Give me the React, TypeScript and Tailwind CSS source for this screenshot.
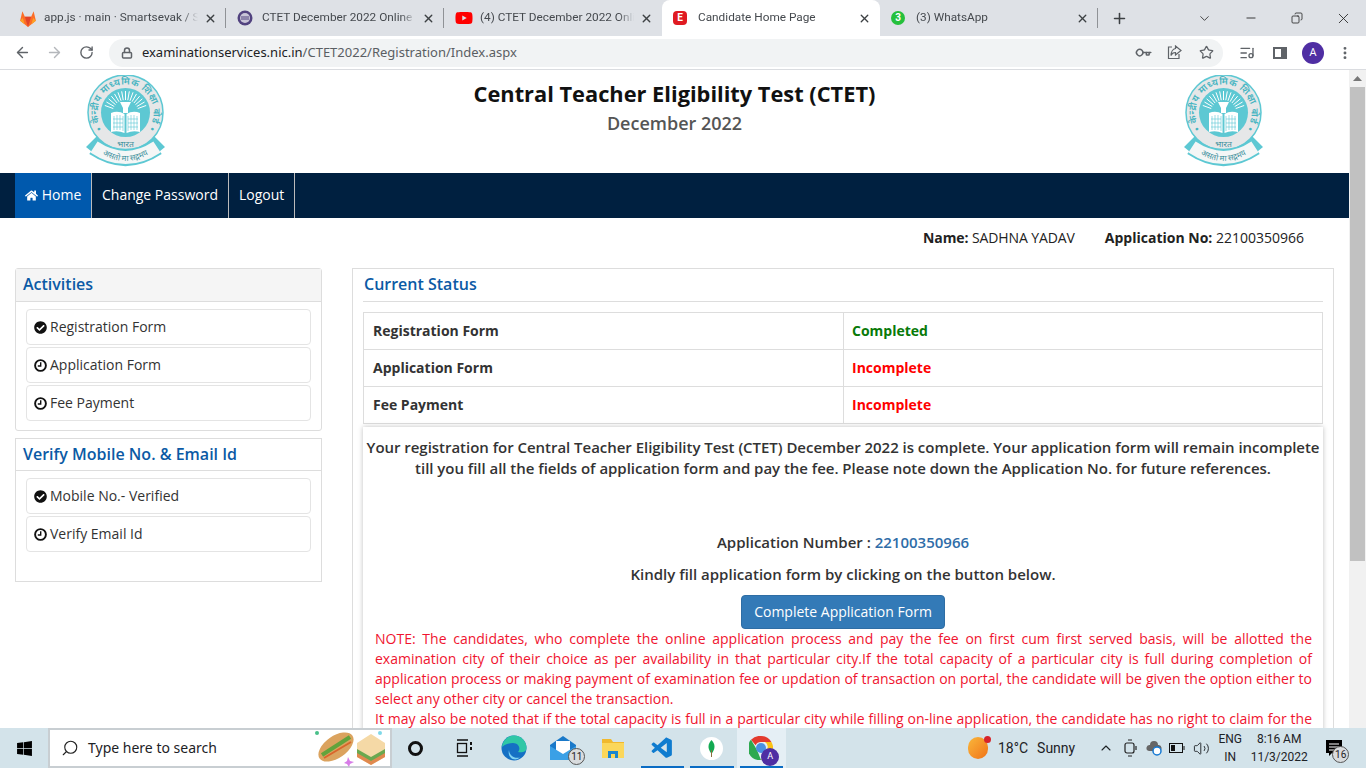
import { ArrowLeft, ArrowRight, ChevronDown, ChevronUp, Copy, Lock, MoreVertical, Plus, RotateCw, Search, Star, Volume2, X, Minus, Key, ListMusic } from "lucide-react";
import { FaCheckCircle, FaHome, FaWindows, FaYoutube } from "react-icons/fa";
import { VscVscode } from "react-icons/vsc";
import { useId } from "react";

const RAYS = Array.from({ length: 15 }, (_, i) => -160 + i * (140 / 14));

// CBSE seal, used both sides of the header
function Seal() {
  const id = useId();
  return (
    <svg width="81" height="92" viewBox="0 0 81 92" className="shrink-0">
      <defs>
        <path id={`${id}a`} d="M19 55.5A28 28 0 1 1 62 55.5" />
        <path id={`${id}b`} d="M14 77Q40.5 95 67 77" />
      </defs>
      <path d="M1 72L12 61L22 70L12 81ZM80 72L69 61L59 70L69 81Z" fill="#5dc8d3" />
      <circle cx="40.5" cy="37.5" r="37.5" fill="#e6e7e8" stroke="#5dc8d3" strokeWidth="1.5" />
      <text fontSize="9.5" fill="#45b4c1" fontFamily="'Noto Sans', sans-serif" fontWeight="600">
        <textPath href={`#${id}a`} startOffset="50%" textAnchor="middle" textLength="122">• केन्द्रीय माध्यमिक शिक्षा बोर्ड •</textPath>
      </text>
      <circle cx="40.5" cy="37.5" r="24.5" fill="#5dc8d3" />
      <g stroke="#fff" strokeWidth="1">
        {RAYS.map((a) => {
          const r = (a * Math.PI) / 180;
          return <line key={a} x1={40.5 + 13 * Math.cos(r)} y1={38 + 13 * Math.sin(r)} x2={40.5 + 22 * Math.cos(r)} y2={38 + 22 * Math.sin(r)} />;
        })}
      </g>
      <path d="M26 38Q33 35 39.5 39V58Q33 55 26 57ZM55 38Q48 35 41.5 39V58Q48 55 55 57Z" fill="#fff" />
      <path d="M29 41V55M32 40V55M35 40V55M38 41V56M43 41V56M46 40V55M49 40V55M52 41V55M28 44H38M28 48H38M28 52H38M43 44H53M43 48H53M43 52H53" stroke="#5dc8d3" strokeWidth="0.6" />
      <path d="M35 27H46L43 33V38H38V33Z" fill="#fff" />
      <text x="40.5" y="72" fontSize="8.5" textAnchor="middle" fill="#3d8f9b" fontFamily="'Noto Sans', sans-serif">भारत</text>
      <path d="M9 72Q40.5 93 72 72" fill="none" stroke="#5dc8d3" strokeWidth="17" />
      <path d="M9 72Q40.5 93 72 72" fill="none" stroke="#f4f6f6" strokeWidth="13" />
      <text fontSize="8" fill="#3d8f9b" fontFamily="'Noto Sans', sans-serif">
        <textPath href={`#${id}b`} startOffset="50%" textAnchor="middle">असतो मा सद्गमय</textPath>
      </text>
    </svg>
  );
}

function Tab({ icon, title, active, sep }: { icon: React.ReactNode; title: string; active?: boolean; sep?: boolean }) {
  return (
    <div className={`relative flex h-9 w-[218px] shrink-0 items-center pl-[11px] pr-[9px] ${active ? "rounded-t-lg bg-white" : ""}`}>
      <span className="flex w-[25px] shrink-0 items-center">{icon}</span>
      <span className="min-w-0 flex-1 overflow-hidden whitespace-nowrap text-[11.8px] text-[#45494e] [mask-image:linear-gradient(to_right,black_90%,transparent)]">{title}</span>
      <X size={13} strokeWidth={2.5} className="ml-[6px] shrink-0 text-[#3c4043]" />
      {sep && <span className="absolute right-0 top-2 h-5 w-px bg-[#8f9296]" />}
    </div>
  );
}

function ClockIcon() {
  return (
    <svg width="13" height="13" viewBox="0 0 13 13" fill="none" stroke="#111">
      <circle cx="6.5" cy="6.5" r="5.4" strokeWidth="1.9" />
      <path d="M6.7 3.2V7H3.8" strokeWidth="1.4" />
    </svg>
  );
}

function PanelItem({ done, label }: { done?: boolean; label: string }) {
  return (
    <div className="flex h-9 items-center gap-[3px] rounded border border-[#e4e4e4] pl-[7px] text-sm text-[#333]">
      {done ? <FaCheckCircle size={13} className="text-[#111]" /> : <ClockIcon />}
      <span>{label}</span>
    </div>
  );
}

function StatusRow({ name, value, ok }: { name: string; value: string; ok?: boolean }) {
  return (
    <tr className="h-[37px]">
      <td className="w-[480px] border border-[#ddd] pl-[9px] font-bold text-[#333]">{name}</td>
      <td className={`border border-[#ddd] pl-2 font-bold ${ok ? "text-[#087a08]" : "text-[#f00]"}`}>{value}</td>
    </tr>
  );
}

function TaskIcon({ children, active, line }: { children: React.ReactNode; active?: boolean; line?: boolean }) {
  return (
    <div className={`relative flex h-10 w-[49.5px] shrink-0 items-center justify-center ${active ? "bg-[#e5eff5]" : ""}`}>
      {children}
      {line && <span className="absolute bottom-0 left-[3px] right-[3px] h-[2px] bg-[#0a6cc4]" />}
    </div>
  );
}

export default function App() {
  return (
    <div className="flex h-[768px] w-[1366px] flex-col overflow-hidden bg-white font-['Open_Sans','Noto_Sans',sans-serif] text-[#333]">
      {/* tab strip */}
      <div className="flex h-9 shrink-0 items-center bg-[#dee1e6] pl-2 font-['Roboto',sans-serif]">
        <Tab sep title="app.js · main · Smartsevak / Smartsevak" icon={
          <svg width="18" height="17" viewBox="0 0 16 15"><path d="M8 15L1 9.5L3 1L5.2 6H10.8L13 1L15 9.5Z" fill="#fc6d26" /><path d="M8 15L5.2 6H10.8Z" fill="#e24329" /><path d="M1 9.5L5 12.6L3.4 7ZM15 9.5L11 12.6L12.6 7Z" fill="#fca326" /></svg>
        } />
        <Tab sep title="CTET December 2022 Online Form" icon={
          <svg width="16" height="16" viewBox="0 0 16 16"><circle cx="8" cy="8" r="7.5" fill="#51427f" /><circle cx="8" cy="8" r="5" fill="#c9c5d8" /><path d="M4 7h8M4 9h8" stroke="#51427f" /></svg>
        } />
        <Tab title="(4) CTET December 2022 Online" icon={<FaYoutube size={18} className="text-[#f00]" />} />
        <Tab active title="Candidate Home Page" icon={
          <span className="flex h-[14px] w-[14px] items-center justify-center rounded-sm bg-[#e01b22] text-[10px] font-bold leading-none text-white">E</span>
        } />
        <Tab sep title="(3) WhatsApp" icon={
          <span className="flex h-[14px] w-[14px] items-center justify-center rounded-full bg-[#25c03c] text-[10px] font-bold leading-none text-white">3</span>
        } />
        <Plus size={17} strokeWidth={2.2} className="ml-[13px] text-[#3c4043]" />
        <div className="ml-auto flex items-center text-[#222]">
          <ChevronDown size={15} strokeWidth={1.3} />
          <Minus size={14} strokeWidth={1.5} className="ml-[32px]" />
          <Copy size={12} strokeWidth={1.6} className="ml-[33px] -scale-x-100" />
          <X size={17} strokeWidth={1.2} className="mx-[14px] ml-[32px]" />
        </div>
      </div>

      {/* toolbar */}
      <div className="flex h-[34px] shrink-0 items-center border-b border-[#dadce0] bg-white pl-[14px] pr-[13px]">
        <ArrowLeft size={17} strokeWidth={2} className="text-[#5f6368]" />
        <ArrowRight size={17} strokeWidth={2} className="ml-[15px] text-[#b4b7bb]" />
        <RotateCw size={15} strokeWidth={2.2} className="ml-[16px] text-[#5f6368]" />
        <div className="ml-[15px] flex h-[28px] w-[1116px] items-center rounded-full bg-[#f1f3f4] pl-[12px] pr-[9px]">
          <Lock size={12} strokeWidth={3} className="text-[#5f6368]" />
          <span className="ml-[9px] font-['Noto_Sans',sans-serif] text-[13px] text-[#5a5e63]"><span className="text-[#202124]">examinationservices.nic.in</span>/CTET2022/Registration/Index.aspx</span>
          <Key size={14} strokeWidth={2.5} className="ml-auto rotate-45 text-[#5f6368]" />
          <svg width="15" height="15" viewBox="0 0 15 15" fill="none" stroke="#5f6368" strokeWidth="1.2" className="ml-[17px]">
            <path d="M5 2H1.5V13.5H12V9" />
            <path d="M8.5 1L14 5.5L8.5 10V7.5C6 7.5 4.5 9 4 10.5C4 7 6 4 8.5 3.5Z" />
          </svg>
          <Star size={15} strokeWidth={2} className="ml-[17px] text-[#5f6368]" />
        </div>
        <ListMusic size={16} strokeWidth={2} className="ml-[16px] text-[#5f6368]" />
        <span className="ml-[18px] h-3 w-[14px] border-2 border-r-[6px] border-[#5f6368]" />
        <span className="ml-[15px] flex h-[22px] w-[22px] items-center justify-center rounded-full bg-[#4f2ea3] text-[11px] text-white">A</span>
        <MoreVertical size={16} strokeWidth={2.4} className="ml-[13px] text-[#5f6368]" />
      </div>

      {/* page + scrollbar */}
      <div className="flex min-h-0 flex-1">
        <div className="min-w-0 flex-1 overflow-hidden">
          <header className="flex h-[103px] items-start justify-between px-[85px] pt-[5px]">
            <Seal />
            <div className="pt-[3px] text-center">
              <h1 className="text-[21.8px] font-bold leading-[32px] text-[#111]">Central Teacher Eligibility Test (CTET)</h1>
              <p className="mt-px text-lg font-semibold leading-6 text-[#555]">December 2022</p>
            </div>
            <Seal />
          </header>

          <nav className="flex h-[45px] bg-[#002040] pl-[15px] text-sm text-white">
            <a className="flex w-[77px] items-center justify-center gap-1 border-r border-[#bbb] bg-[#0059ad] pb-px"><FaHome size={13} />Home</a>
            <a className="flex items-center border-r border-[#bbb] px-[10px] pb-px">Change Password</a>
            <a className="flex items-center border-r border-[#bbb] px-[10px] pb-px">Logout</a>
          </nav>

          <div className="flex h-[40px] items-center justify-end gap-[30px] pr-[45px] text-sm text-[#222]">
            <span className="tracking-[-0.1px]"><b>Name:</b> SADHNA YADAV</span>
            <span><b>Application No:</b> 22100350966</span>
          </div>

          <div className="flex items-start gap-[30px] pl-[15px] pt-[10px]">
            <aside className="flex w-[307px] shrink-0 flex-col gap-[7px]">
              <section className="h-[163px] rounded-[3px] border border-[#ddd]">
                <h3 className="flex h-[33px] items-center border-b border-[#ddd] bg-[#f5f5f5] pb-[2px] pl-[7px] text-base font-semibold text-[#0b5aa5]">Activities</h3>
                <div className="flex flex-col gap-[2px] px-[10px] pt-[7px]">
                  <PanelItem done label="Registration Form" />
                  <PanelItem label="Application Form" />
                  <PanelItem label="Fee Payment" />
                </div>
              </section>
              <section className="h-[144px] border border-[#ddd]">
                <h3 className="flex h-[32px] items-center border-b border-[#ddd] pb-[2px] pl-[7px] text-base font-semibold text-[#0b5aa5]">Verify Mobile No. &amp; Email Id</h3>
                <div className="flex flex-col gap-[2px] px-[10px] pt-[7px]">
                  <PanelItem done label="Mobile No.- Verified" />
                  <PanelItem label="Verify Email Id" />
                </div>
              </section>
            </aside>

            <main className="w-[982px] shrink-0 border border-[#ddd] px-[10px] pb-4 text-sm">
              <h3 className="flex h-[33px] items-center border-b border-[#ddd] pb-[2px] pl-px text-base font-semibold text-[#0b5aa5]">Current Status</h3>
              <table className="mt-[10px] w-[960px] border-collapse">
                <tbody>
                  <StatusRow name="Registration Form" value="Completed" ok />
                  <StatusRow name="Application Form" value="Incomplete" />
                  <StatusRow name="Fee Payment" value="Incomplete" />
                </tbody>
              </table>
              <div className="mt-[3px] w-[960px] pb-4 shadow-[0_0_5px_rgba(0,0,0,0.25)]">
                <p className="pt-[10px] text-center text-[15px] font-semibold leading-[21px] tracking-[-0.03px] text-[#333]">
                  Your registration for Central Teacher Eligibility Test (CTET) December 2022 is complete. Your application form will remain incomplete till you fill all the fields of application form and pay the fee. Please note down the Application No. for future references.
                </p>
                <p className="mt-[53px] text-center text-[15px] font-semibold leading-[21px]">Application Number : <span className="text-[#2f6da8]">22100350966</span></p>
                <p className="mt-[11px] text-center text-[15px] font-semibold leading-[21px]">Kindly fill application form by clicking on the button below.</p>
                <div className="mt-[10px] flex justify-center">
                  <button className="h-[34px] w-[204px] rounded border border-[#2e6da4] bg-[#337ab7] text-sm text-white">Complete Application Form</button>
                </div>
                <div className="pl-[12px] pr-[11px] text-sm leading-5 text-[#f0142f]">
                  <p className="text-justify">NOTE: The candidates, who complete the online application process and pay the fee on first cum first served basis, will be allotted the examination city of their choice as per availability in that particular city.If the total capacity of a particular city is full during completion of application process or making payment of examination fee or updation of transaction on portal, the candidate will be given the option either to select any other city or cancel the transaction.</p>
                  <p className="text-justify">It may also be noted that if the total capacity is full in a particular city while filling on-line application, the candidate has no right to claim for the same city and will have to choose another city.</p>
                </div>
              </div>
            </main>
          </div>
        </div>

        <div className="flex w-[17px] shrink-0 flex-col bg-[#f1f1f1]">
          <svg width="9" height="5" viewBox="0 0 9 5" className="mx-auto mt-[6px]"><path d="M4.5 0L9 5H0Z" fill="#777" /></svg>
          <div className="mx-[1px] mt-[6px] h-[474px] bg-[#c1c1c1]" />
        </div>
      </div>

      {/* windows taskbar */}
      <div className="flex h-10 shrink-0 items-center bg-[#d3e3ea] font-['Roboto',sans-serif] text-[#1d2226]">
        <div className="flex w-12 justify-center"><FaWindows size={17} className="text-black" /></div>
        <div className="flex h-10 w-[344px] items-center border-2 border-[#c8ced2] bg-white pl-[11px] font-['Noto_Sans',sans-serif]">
          <Search size={18} strokeWidth={1.5} className="-scale-x-100 text-[#222]" />
          <span className="ml-[9px] text-sm">Type here to search</span>
          <svg width="74" height="38" viewBox="0 0 74 38" className="ml-auto mr-[2px]">
            <ellipse cx="22" cy="18" rx="20" ry="11" transform="rotate(-35 22 18)" fill="#dba35f" />
            <path d="M8 26L36 8" stroke="#62a33c" strokeWidth="4" />
            <path d="M10 29L37 13" stroke="#d9652b" strokeWidth="2" />
            <path d="M57 5L71 14V28L57 36L43 28V14Z" fill="#f5d9a6" />
            <path d="M43 20L57 28L71 20V25L57 33L43 25Z" fill="#6aa84f" />
            <path d="M43 24L57 32L71 24V28L57 36L43 28Z" fill="#e0894f" />
            <circle cx="3" cy="4" r="2" fill="#49c08a" />
            <circle cx="66" cy="4" r="2" fill="#7fd8e8" />
            <path d="M34 28L36 32L40 33L36 35L35 38L33 35L30 34L33 32Z" fill="#d77ce8" />
          </svg>
        </div>
        <div className="flex h-10 w-[47px] items-center justify-center"><span className="h-[15px] w-[15px] rounded-full border-[3px] border-[#111]" /></div>
        <div className="flex h-10 w-[50px] items-center justify-center">
          <svg width="17" height="18" viewBox="0 0 17 18" fill="none" stroke="#111" strokeWidth="1.3"><path d="M1 1H12M1 17H12" /><rect x="1.5" y="4.5" width="9" height="9" /><path d="M15 3V6M15 8V11" strokeWidth="2" /></svg>
        </div>
        <TaskIcon>
          <svg width="26" height="26" viewBox="0 0 26 26">
            <circle cx="13" cy="13" r="12.5" fill="#1570c4" />
            <path d="M1 12C2 4 8 .5 13 .5C20 .5 25.5 6 25.5 13C25.5 17 21 18 17 17C20 14 18 8 12 8C6 8 2 11 1 12Z" fill="#2fc7a6" />
            <path d="M8 15C8 20 13 24 19 22.5C14 27 6 23 8 15Z" fill="#7fd3f2" />
          </svg>
        </TaskIcon>
        <TaskIcon>
          <div className="relative">
            <svg width="26" height="24" viewBox="0 0 26 24"><path d="M13 0L26 9V24H0V9Z" fill="#1a79c9" /><path d="M6 5H20V15L13 19L6 15Z" fill="#fff" /><path d="M0 10L13 18L26 10V24H0Z" fill="#3aa0e6" /></svg>
            <span className="absolute -bottom-[5px] -right-[9px] flex h-[17px] w-[17px] items-center justify-center rounded-full border border-[#555] bg-[#d9dcde] text-[10px] leading-none">11</span>
          </div>
        </TaskIcon>
        <TaskIcon>
          <svg width="22" height="22" viewBox="0 0 22 22"><path d="M0 2H9L11 5H22V21H0Z" fill="#f1b92e" /><path d="M0 6H22V21H0Z" fill="#fbd75b" /><path d="M6 14H16V21H13V17H9V21H6Z" fill="#1a86d0" /></svg>
        </TaskIcon>
        <TaskIcon line>
          <VscVscode size={25} className="text-[#0f7ccf]" />
        </TaskIcon>
        <TaskIcon line>
          <span className="flex h-[23px] w-[23px] items-center justify-center rounded-full bg-white">
            <svg width="9" height="17" viewBox="0 0 9 17"><path d="M4.5 0C8 4 9 8 4.5 14C0 8 1 4 4.5 0Z" fill="#13aa52" /><path d="M4.5 10V17" stroke="#8a6d3b" /></svg>
          </span>
        </TaskIcon>
        <TaskIcon active line>
          <div className="relative">
            <svg width="24" height="24" viewBox="0 0 24 24">
              <path d="M12 0A12 12 0 0 1 22.4 6H12A6 6 0 0 0 6.6 9.3L2 3.8A12 12 0 0 1 12 0Z" fill="#e33b2e" />
              <path d="M2 3.8L8 14L12 24A12 12 0 0 1 2 3.8Z" fill="#2da94f" />
              <path d="M22.4 6A12 12 0 0 1 12 24L17.2 15A6 6 0 0 0 16 6Z" fill="#fbc116" />
              <circle cx="12" cy="12" r="5" fill="#4a90e2" />
            </svg>
            <span className="absolute -bottom-[6px] -right-[6px] flex h-[18px] w-[18px] items-center justify-center rounded-full bg-[#4f2ea3] text-[9px] text-white">A</span>
          </div>
        </TaskIcon>

        <div className="ml-[182px] flex items-center">
          <span className="relative h-[22px] w-[20px] rounded-full bg-gradient-to-br from-[#f9b73b] to-[#ef7216]">
            <span className="absolute -right-[3px] -top-px h-[7px] w-[7px] rounded-full bg-[#d6242a]" />
          </span>
          <span className="ml-[10px] text-sm">18°C</span>
          <span className="ml-[9px] text-sm">Sunny</span>
        </div>
        <ChevronUp size={16} strokeWidth={1.6} className="ml-[23px]" />
        <svg width="14" height="18" viewBox="0 0 14 18" fill="none" stroke="#222" strokeWidth="1.2" className="ml-[10px]"><rect x="1" y="4" width="9" height="10" rx="2" /><path d="M12 7V11M4 1H8M4 17H8" /></svg>
        <svg width="16" height="16" viewBox="0 0 16 16" className="ml-[8px]"><path d="M3 11A3 3 0 0 1 4 5A4 4 0 0 1 12 5A3 3 0 0 1 13 11Z" fill="#666" /><circle cx="11" cy="11" r="4" fill="#fff" stroke="#1478d2" strokeWidth="1.5" /></svg>
        <svg width="16" height="10" viewBox="0 0 16 10" fill="none" stroke="#111" className="ml-[7px]"><rect x="0.5" y="0.5" width="13" height="9" /><rect x="2" y="2" width="4" height="6" fill="#111" stroke="none" /><path d="M15 3V7" /></svg>
        <Volume2 size={17} strokeWidth={1.3} className="ml-[8px]" />
        <div className="ml-[5px] flex w-[30px] flex-col items-center text-xs leading-[18px]"><span>ENG</span><span>IN</span></div>
        <div className="ml-[3px] flex w-[62px] flex-col items-center text-xs leading-[18px]"><span>8:16 AM</span><span>11/3/2022</span></div>
        <div className="relative ml-[16px]">
          <svg width="16" height="16" viewBox="0 0 16 16"><path d="M0 0H16V13H6L3 16V13H0Z" fill="#000" /><path d="M3 4H13M3 7H13M3 10H10" stroke="#fff" /></svg>
          <span className="absolute -bottom-[7px] -right-[7px] flex h-[17px] w-[17px] items-center justify-center rounded-full border border-[#555] bg-[#d9dcde] text-[10px] leading-none">16</span>
        </div>
      </div>
    </div>
  );
}
